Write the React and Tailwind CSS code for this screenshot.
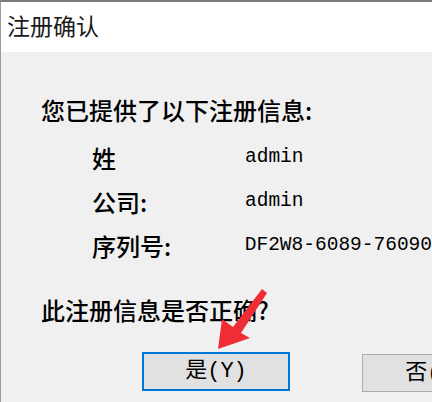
import React from 'react';

const cjk = { fontFamily: '"Noto Sans CJK SC", "Noto Sans", sans-serif' };
const mono = { fontFamily: '"Liberation Mono", "Noto Sans CJK SC", monospace' };

const rows = [
  { label: '姓', value: 'admin' },
  { label: '公司:', value: 'admin' },
  { label: '序列号:', value: 'DF2W8-6089-76090' },
];

// red annotation arrow pointing at the "yes" button
const Arrow = () => (
  <svg
    className="absolute left-0 top-0 pointer-events-none"
    width="432"
    height="402"
    viewBox="0 0 432 402"
  >
    <polygon
      points="217,347 221,317 232,325 261,287 266,291 240,331 249,336"
      fill="#ee2e34"
    />
  </svg>
);

const App = () => {
  return (
    <div className="relative w-[432px] h-[402px] overflow-hidden bg-[#f0f0f0] border-t-2 border-l border-t-[#7a7a7a] border-l-[#9a9a9a] text-black" style={cjk}>
      <div className="h-[50px] bg-white flex items-center pl-[6px] pb-[4px]">
        <span className="text-[23px] leading-none text-[#1a1a1a]">注册确认</span>
      </div>

      <div className="pl-[40px] pt-[44px]">
        <div className="text-[24px] leading-[28px] font-medium">您已提供了以下注册信息:</div>

        <div className="mt-[12px] pl-[51px]">
          {rows.map((r) => (
            <div key={r.label} className="flex items-center h-[44px]">
              <div className="w-[153px] text-[24px] font-medium">{r.label}</div>
              <div className="text-[19.5px] whitespace-nowrap" style={mono}>{r.value}</div>
            </div>
          ))}
        </div>

        <div className="mt-[28px] text-[24px] leading-[28px] font-medium">此注册信息是否正确?</div>

        <div className="mt-[28px] ml-[101px] flex gap-[72px]">
          <button className="shrink-0 w-[148px] h-[39px] bg-[#e1e1e1] border-2 border-[#0078d7] flex items-center justify-center text-[22px]" style={mono}>
            是(Y)
          </button>
          <button className="shrink-0 w-[148px] h-[38px] mt-[2px] bg-[#e1e1e1] border border-[#adadad] flex items-center justify-center text-[22px]" style={mono}>
            否(N)
          </button>
        </div>
      </div>

      <Arrow />
    </div>
  );
};

export default App;
